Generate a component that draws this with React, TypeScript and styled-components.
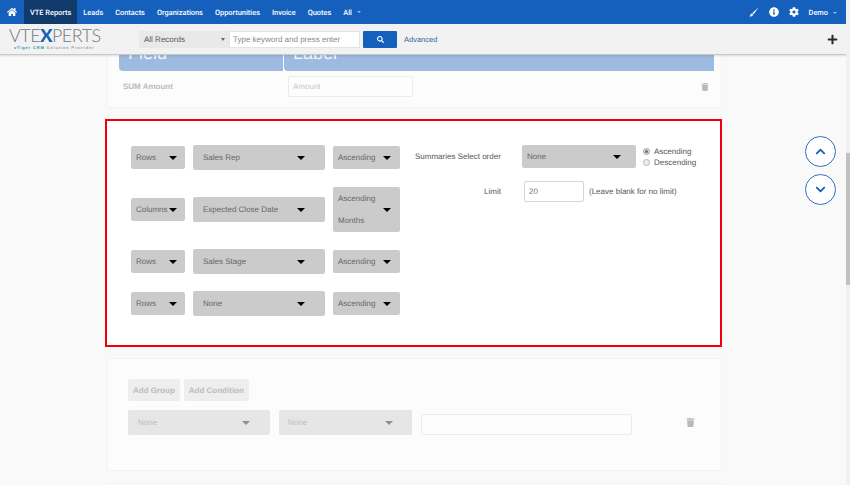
import React, { FC } from "react";
import styled, { createGlobalStyle } from "styled-components";
import {
  FaHome,
  FaInfoCircle,
  FaCog,
  FaSearch,
  FaPlus,
  FaTrash,
  FaChevronUp,
  FaChevronDown,
} from "react-icons/fa";

const GlobalStyle = createGlobalStyle`
  html, body {
    margin: 0;
    padding: 0;
    height: 100%;
    overflow: hidden;
    background: #f9f9f9;
    font-family: "Liberation Sans", Arial, sans-serif;
    text-rendering: geometricPrecision;
  }
  * { box-sizing: border-box; }
`;

const Page = styled.div`
  position: relative;
  width: 850px;
  height: 485px;
  overflow: hidden;
  display: flex;
  flex-direction: column;
`;

const TopNav = styled.nav`
  height: 24px;
  flex: none;
  background: #1560bd;
  display: flex;
  align-items: stretch;
  padding-right: 13px;
  color: #fff;
  font-family: Roboto, "Liberation Sans", sans-serif;
`;

const HomeLink = styled.div`
  width: 24px;
  display: flex;
  align-items: center;
  justify-content: center;
  font-size: 10px;
`;

const NavItem = styled.div<{ $active?: boolean }>`
  display: flex;
  align-items: center;
  padding: 0 6px;
  font-size: 7.4px;
  font-weight: 500;
  background: ${(p) => (p.$active ? "#0f3a6b" : "transparent")};
`;

const Caret = styled.span`
  display: inline-block;
  margin-left: 5px;
  vertical-align: middle;
  border-left: 2px solid transparent;
  border-right: 2px solid transparent;
  border-top: 2px solid #9dbbe0;
`;

const NavRight = styled.div`
  margin-left: auto;
  display: flex;
  align-items: center;
  gap: 10px;
  font-size: 10px;
`;

const DemoLabel = styled.span`
  font-size: 7.4px;
  font-weight: 500;
`;

const SubBar = styled.div`
  position: relative;
  z-index: 2;
  height: 31px;
  flex: none;
  background: #f2f2f2;
  border-bottom: 1px solid #c9c9c9;
  box-shadow: 0 1px 2px rgba(0, 0, 0, 0.12);
  display: flex;
  align-items: center;
  padding: 0 12px 0 9px;
`;

const Logo = styled.div`
  width: 130px;
  flex: none;
  display: flex;
  flex-direction: column;
`;

const LogoWord = styled.div`
  font-family: Lato, "Liberation Sans", sans-serif;
  font-weight: 300;
  font-size: 18px;
  letter-spacing: -0.5px;
  color: #6f767b;
  height: 15px;
  line-height: 15px;
`;

const LogoX = styled.span`
  color: #1560bd;
  font-weight: 900;
`;

const LogoTag = styled.div`
  font-size: 4px;
  line-height: 5px;
  letter-spacing: 0.85px;
  color: #9aa1a5;
  margin: 2px 0 0 5px;
  font-weight: 700;
  white-space: nowrap;
`;

const LogoTagAccent = styled.span`
  color: #1f8fb0;
`;

const RecordSelect = styled.div`
  width: 90px;
  height: 17px;
  background: #e9e9e9;
  color: #555;
  font-size: 8px;
  display: flex;
  align-items: center;
  justify-content: space-between;
  padding: 0 4px 0 5px;
`;

const SmallCaret = styled.span`
  border-left: 2px solid transparent;
  border-right: 2px solid transparent;
  border-top: 3px solid #666;
`;

const SearchInput = styled.div`
  width: 131px;
  height: 17px;
  background: #fff;
  border: 1px solid #e4e4e4;
  color: #888;
  font-size: 8px;
  display: flex;
  align-items: center;
  padding-left: 3px;
`;

const SearchButton = styled.div`
  width: 34px;
  height: 17px;
  margin-left: 3px;
  background: #1560bd;
  border-radius: 1px;
  color: #fff;
  font-size: 7px;
  display: flex;
  align-items: center;
  justify-content: center;
`;

const AdvancedLink = styled.span`
  margin-left: 7px;
  color: #34659f;
  font-size: 7.5px;
`;

const AddIcon = styled.div`
  margin-left: auto;
  color: #2b2b2b;
  font-size: 11px;
  display: flex;
`;

const Content = styled.main`
  width: 615px;
  margin-left: 107px;
  display: flex;
  flex-direction: column;
`;

const FadedCard = styled.section`
  background: #fcfcfc;
  border: 1px solid #f3f3f3;
`;

const TopCard = styled(FadedCard)`
  height: 53px;
  border-top: 0;
  padding: 0 7px 0 11px;
`;

const HeaderRow = styled.div`
  display: grid;
  grid-template-columns: 164px 1fr;
  gap: 1px;
  height: 16px;
`;

const HeaderCell = styled.div`
  background: #9dbbe0;
  border-radius: 0 0 0 4px;
  color: #f4f7fb;
  font-size: 18px;
  line-height: 14px;
  padding-left: 9px;
  overflow: hidden;
`;

const HeaderText = styled.div`
  margin-top: -9px;
`;

const SumRow = styled.div`
  display: flex;
  align-items: center;
  margin-top: 5px;
`;

const SumLabel = styled.div`
  width: 169px;
  padding-left: 4px;
  font-size: 8px;
  font-weight: 700;
  color: #bbb;
`;

const FadedInput = styled.div<{ $width: number }>`
  width: ${(p) => p.$width}px;
  height: 21px;
  background: #fdfdfd;
  border: 1px solid #ececec;
  border-radius: 2px;
  color: #c6c6c6;
  font-size: 8px;
  display: flex;
  align-items: center;
  padding-left: 4px;
`;

const TrashIcon = styled.div`
  margin-left: auto;
  margin-right: 5px;
  color: #b9b9b9;
  font-size: 8px;
  display: flex;
`;

const ConditionTrash = styled(TrashIcon)`
  margin: 0 0 0 45px;
  font-size: 9px;
`;

const Highlight = styled.section`
  width: 617px;
  margin: 11px 0 11px -2px;
  height: 228px;
  background: #fff;
  border: 2px solid #f0000f;
  padding: 24px 0 0 24px;
  display: flex;
  color: #555;
`;

const SortColumn = styled.div`
  width: 284px;
  flex: none;
  display: flex;
  flex-direction: column;
  gap: 17px;
`;

const SortRow = styled.div`
  display: grid;
  grid-template-columns: 54px 132px 67px;
  column-gap: 8px;
  align-items: center;
`;

const Select = styled.div<{ $h: number; $l?: number; $r?: number; $faded?: boolean }>`
  height: ${(p) => p.$h}px;
  background: ${(p) => (p.$faded ? "#e6e6e6" : "#cbcbcb")};
  border-radius: 2px;
  display: flex;
  align-items: center;
  justify-content: space-between;
  padding: 0 ${(p) => p.$r ?? 9}px 0 ${(p) => p.$l ?? 5}px;
  font-size: 8px;
  color: ${(p) => (p.$faded ? "#bdbdbd" : "#666")};
  white-space: nowrap;
`;

const SelectArrow = styled.span<{ $faded?: boolean }>`
  flex: none;
  width: 0;
  height: 0;
  border-left: 4px solid transparent;
  border-right: 4px solid transparent;
  border-top: 4px solid ${(p) => (p.$faded ? "#8f8f8f" : "#000")};
`;

const StackedText = styled.div`
  display: flex;
  flex-direction: column;
  gap: 13px;
`;

const SummaryColumn = styled.div`
  display: grid;
  grid-template-columns: 86px 114px auto;
  grid-template-rows: 23px 21px;
  column-gap: 21px;
  row-gap: 13px;
  align-items: center;
  font-size: 8px;
  color: #555;
  align-content: start;
`;

const FieldLabel = styled.div<{ $right?: boolean }>`
  text-align: ${(p) => (p.$right ? "right" : "left")};
  white-space: nowrap;
`;

const RadioGroup = styled.div`
  margin-left: -14px;
  display: flex;
  flex-direction: column;
  line-height: 11px;
  font-size: 8px;
`;

const RadioRow = styled.div`
  display: flex;
  align-items: center;
  gap: 4px;
`;

const RadioDot = styled.span<{ $on?: boolean }>`
  width: 7px;
  height: 7px;
  border-radius: 50%;
  border: 1px solid #b5b5b5;
  background: ${(p) => (p.$on ? "#666" : "#eee")};
  box-shadow: ${(p) => (p.$on ? "inset 0 0 0 1px #eee" : "none")};
`;

const LimitWrap = styled.div`
  grid-column: 2 / 4;
  display: flex;
  align-items: center;
  padding-left: 2px;
  gap: 5px;
  white-space: nowrap;
`;

const LimitInput = styled.div`
  width: 60px;
  height: 21px;
  background: #fff;
  border: 1px solid #d5d5d5;
  border-radius: 2px;
  display: flex;
  align-items: center;
  padding-left: 4px;
  color: #777;
`;

const ConditionCard = styled(FadedCard)`
  height: 113px;
  padding: 20px 0 0 20px;
  display: flex;
  flex-direction: column;
  gap: 9px;
`;

const ButtonRow = styled.div`
  display: flex;
  gap: 4px;
`;

const FadedButton = styled.div`
  height: 22px;
  padding: 0 5px;
  background: #eee;
  border-radius: 2px;
  color: #bbb;
  font-size: 8px;
  font-weight: 700;
  display: flex;
  align-items: center;
`;

const ConditionRow = styled.div`
  display: flex;
  gap: 9px;
  align-items: flex-end;
`;

const ConditionField = styled(Select)<{ $w: number }>`
  width: ${(p) => p.$w}px;
`;

const TrashSlot = styled.div`
  align-self: center;
`;

const BottomCard = styled(FadedCard)`
  margin-top: 12px;
  height: 40px;
`;

const ScrollButtons = styled.div`
  position: absolute;
  left: 805px;
  top: 136px;
  display: flex;
  flex-direction: column;
  gap: 7px;
`;

const ScrollButton = styled.div`
  width: 31px;
  height: 31px;
  background: #fff;
  border: 1px solid #2f6fc0;
  border-radius: 50%;
  color: #1560bd;
  font-size: 11px;
  display: flex;
  align-items: center;
  justify-content: center;
`;

const ScrollTrack = styled.div`
  position: absolute;
  z-index: 3;
  right: 0;
  top: 0;
  width: 4px;
  height: 485px;
  background: #f1f1f1;
`;

const ScrollThumb = styled.div`
  margin-top: 153px;
  height: 132px;
  background: #c1c1c1;
`;

type SortProps = {
  axis: string;
  field: string;
  order?: string;
};

const SortLine: FC<SortProps> = ({ axis, field, order }) => (
  <SortRow>
    <Select $h={23} $r={8}>
      {axis}
      <SelectArrow />
    </Select>
    <Select $h={25} $l={10} $r={20}>
      {field}
      <SelectArrow />
    </Select>
    {order ? (
      <Select $h={45}>
        <StackedText>
          <span>Ascending</span>
          <span>{order}</span>
        </StackedText>
        <SelectArrow />
      </Select>
    ) : (
      <Select $h={23}>
        Ascending
        <SelectArrow />
      </Select>
    )}
  </SortRow>
);

const BrushIcon: FC = () => (
  <svg width="10" height="10" viewBox="0 0 10 10" fill="#fff">
    <path d="M9.8 0.2 L3.4 6 L4.6 7.2 Z" />
    <path d="M3 6.4 C1.9 6.5 1.6 7.3 1.4 8 C1.2 8.6 0.8 8.9 0.2 9.2 C1.8 9.8 3.8 9.3 4.2 7.6 Z" />
  </svg>
);

const navItems = ["Leads", "Contacts", "Organizations", "Opportunities", "Invoice", "Quotes"];

const App: FC = () => {
  return (
    <Page>
      <GlobalStyle />
      <TopNav>
        <HomeLink>
          <FaHome />
        </HomeLink>
        <NavItem $active>VTE Reports</NavItem>
        {navItems.map((item) => (
          <NavItem key={item}>{item}</NavItem>
        ))}
        <NavItem>
          All
          <Caret />
        </NavItem>
        <NavRight>
          <BrushIcon />
          <FaInfoCircle />
          <FaCog />
          <DemoLabel>
            Demo
            <Caret />
          </DemoLabel>
        </NavRight>
      </TopNav>
      <SubBar>
        <Logo>
          <LogoWord>
            VTE<LogoX>X</LogoX>PERTS
          </LogoWord>
          <LogoTag>
            <LogoTagAccent>vTiger CRM</LogoTagAccent> Solution Provider
          </LogoTag>
        </Logo>
        <RecordSelect>
          All Records
          <SmallCaret />
        </RecordSelect>
        <SearchInput>Type keyword and press enter</SearchInput>
        <SearchButton>
          <FaSearch />
        </SearchButton>
        <AdvancedLink>Advanced</AdvancedLink>
        <AddIcon>
          <FaPlus />
        </AddIcon>
      </SubBar>
      <Content>
        <TopCard>
          <HeaderRow>
            <HeaderCell>
              <HeaderText>Field</HeaderText>
            </HeaderCell>
            <HeaderCell>
              <HeaderText>Label</HeaderText>
            </HeaderCell>
          </HeaderRow>
          <SumRow>
            <SumLabel>SUM Amount</SumLabel>
            <FadedInput $width={125}>Amount</FadedInput>
            <TrashIcon>
              <FaTrash />
            </TrashIcon>
          </SumRow>
        </TopCard>
        <Highlight>
          <SortColumn>
            <SortLine axis="Rows" field="Sales Rep" />
            <SortLine axis="Columns" field="Expected Close Date" order="Months" />
            <SortLine axis="Rows" field="Sales Stage" />
            <SortLine axis="Rows" field="None" />
          </SortColumn>
          <SummaryColumn>
            <FieldLabel>Summaries Select order</FieldLabel>
            <Select $h={23} $r={15}>
              None
              <SelectArrow />
            </Select>
            <RadioGroup>
              <RadioRow>
                <RadioDot $on />
                Ascending
              </RadioRow>
              <RadioRow>
                <RadioDot />
                Descending
              </RadioRow>
            </RadioGroup>
            <FieldLabel $right>Limit</FieldLabel>
            <LimitWrap>
              <LimitInput>20</LimitInput>
              (Leave blank for no limit)
            </LimitWrap>
          </SummaryColumn>
        </Highlight>
        <ConditionCard>
          <ButtonRow>
            <FadedButton>Add Group</FadedButton>
            <FadedButton>Add Condition</FadedButton>
          </ButtonRow>
          <ConditionRow>
            <ConditionField $w={142} $h={25} $l={10} $r={20} $faded>
              None
              <SelectArrow $faded />
            </ConditionField>
            <ConditionField $w={133} $h={25} $l={9} $r={19} $faded>
              None
              <SelectArrow $faded />
            </ConditionField>
            <FadedInput $width={211} />
            <TrashSlot>
              <ConditionTrash>
                <FaTrash />
              </ConditionTrash>
            </TrashSlot>
          </ConditionRow>
        </ConditionCard>
        <BottomCard />
      </Content>
      <ScrollButtons>
        <ScrollButton>
          <FaChevronUp />
        </ScrollButton>
        <ScrollButton>
          <FaChevronDown />
        </ScrollButton>
      </ScrollButtons>
      <ScrollTrack>
        <ScrollThumb />
      </ScrollTrack>
    </Page>
  );
};

export default App;
